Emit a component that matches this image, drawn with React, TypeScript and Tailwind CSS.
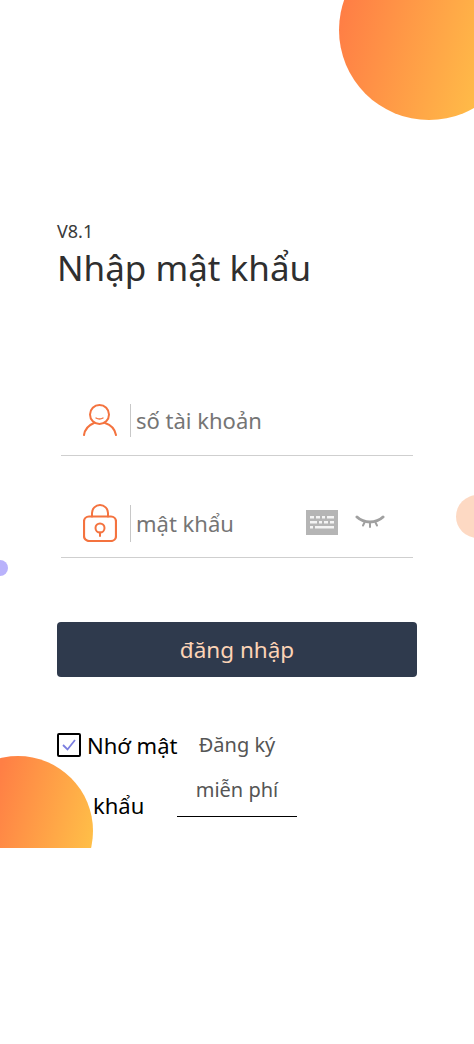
import React from 'react';

const font = { fontFamily: '"Noto Sans", "Liberation Sans", sans-serif' };

function UserIcon() {
  return (
    <svg width="34" height="34" viewBox="0 0 34 34" fill="none" stroke="#f4733f" strokeWidth="2" strokeLinecap="round">
      <circle cx="16.500" cy="11.500" r="9.500" />
      <path d="M13 15c2 1.200 5 1.200 7 0" strokeWidth="1.400" />
      <path d="M1 32c1-6 5-10 10-12M33 32c-1-6-5-10-11-12" />
    </svg>
  );
}

function LockIcon() {
  return (
    <svg width="34" height="38" viewBox="0 0 34 38" fill="none" stroke="#f4733f" strokeWidth="2" strokeLinecap="round">
      <path d="M9 12.500V9a8 8 0 0 1 16 0v3.500" />
      <rect x="1" y="12.500" width="32" height="24.500" rx="5" strokeWidth="2.200" />
      <circle cx="17" cy="24" r="4.500" />
      <path d="M17 28.500V32" />
    </svg>
  );
}

function KeyboardIcon() {
  return (
    <svg width="32" height="25" viewBox="0 0 32 25">
      <rect width="32" height="25" fill="#b5b5b5" />
      <g fill="#ffffff" fillOpacity="0.85">
        <rect x="4" y="6" width="4" height="2.500" />
        <rect x="10" y="6" width="4" height="2.500" />
        <rect x="16" y="6" width="3" height="2.500" />
        <rect x="21" y="6" width="7" height="2.500" />
        <rect x="4" y="11" width="7" height="2.500" />
        <rect x="13" y="11" width="3" height="2.500" />
        <rect x="18" y="11" width="4" height="2.500" />
        <rect x="24" y="11" width="4" height="2.500" />
        <rect x="4" y="16" width="3" height="2.500" />
        <rect x="9" y="16" width="19" height="2.500" />
      </g>
    </svg>
  );
}

function EyeClosedIcon() {
  return (
    <svg width="30" height="18" viewBox="0 0 30 18" fill="none" stroke="#a0a0a0" strokeWidth="3" strokeLinecap="round">
      <path d="M2 4c7 6.500 19 6.500 26 0" />
      <path d="M9.500 9.500l-1.500 3M15 10.500V14M20.500 9.500l1.500 3" strokeWidth="2" />
    </svg>
  );
}

export default function App() {
  return (
    <div className="min-h-[1044px] bg-white" style={font}>
      <div className="relative h-[848px] overflow-hidden px-[57px] pt-[221px]">
        {/* decoration circles */}
        <div className="absolute left-[339px] top-[-60px] h-[180px] w-[180px] rounded-full bg-linear-[105deg] from-[#ff7a45] from-[5%] to-[#ffc048] to-[85%]" />
        <div className="absolute left-[456px] top-[495px] h-[43px] w-[43px] rounded-full bg-[#fdd9c3]" />
        <div className="absolute left-[-8px] top-[560px] h-[16px] w-[16px] rounded-full bg-[#b9b2fb]" />
        <div className="absolute left-[-57px] top-[756px] h-[150px] w-[150px] rounded-full bg-linear-[105deg] from-[#ff7f45] from-[32%] to-[#ffc048] to-[92%]" />

        <div className="relative">
          <p className="text-[18px] leading-[21px] text-[#3a3a3a]">V8.1</p>
          <h1 className="pt-px text-[35px] leading-[49px] text-[#2f2f2f]">Nhập mật khẩu</h1>
        </div>

        {/* inputs */}
        <div className="relative mt-[92px] ml-[4px] w-[352px]">
          <div className="flex h-[72px] items-center border-b border-[#cfcfcf] pt-px">
            <div className="ml-[22px] flex w-[47px] items-center">
              <UserIcon />
            </div>
            <div className="h-[33px] w-px bg-[#c8c8c8]" />
            <span className="ml-[5px] text-[22px] text-[#757575]">số tài khoản</span>
          </div>
          <div className="mt-[30px] flex h-[72px] items-center border-b border-[#cfcfcf] pt-[3px]">
            <div className="ml-[22px] flex w-[47px] items-center">
              <LockIcon />
            </div>
            <div className="h-[37px] w-px bg-[#c8c8c8]" />
            <span className="ml-[5px] text-[22px] text-[#757575]">mật khẩu</span>
            <div className="ml-auto mr-[28px] -mt-[2px] flex items-center gap-[17px]">
              <KeyboardIcon />
              <EyeClosedIcon />
            </div>
          </div>
        </div>

        {/* login */}
        <button className="relative mt-[64px] h-[55px] w-[360px] rounded-[4px] bg-[#2f3a4d] text-[22.5px] text-[#fcd3b6]">
          đăng nhập
        </button>

        {/* remember + register */}
        <div className="relative mt-[45px] flex">
          <div className="w-[120px] text-[22px] text-black">
            <div className="flex h-[46px] items-center">
              <span className="mr-[6px] flex h-[24px] w-[24px] shrink-0 items-center justify-center rounded-[2px] border-2 border-black">
                <svg width="16" height="14" viewBox="0 0 16 14" fill="none" stroke="#7b7fe0" strokeWidth="1.800">
                  <path d="M2 7l4.500 4.500L14 2" />
                </svg>
              </span>
              <span className="whitespace-nowrap">Nhớ mật</span>
            </div>
            <div className="ml-[36px] h-[52px] leading-[74px]">khẩu</div>
          </div>
          <div className="h-[95px] w-[120px] border-b border-black text-center text-[20px] leading-[45px] text-[#555555]">
            Đăng ký miễn phí
          </div>
        </div>
      </div>
    </div>
  );
}
